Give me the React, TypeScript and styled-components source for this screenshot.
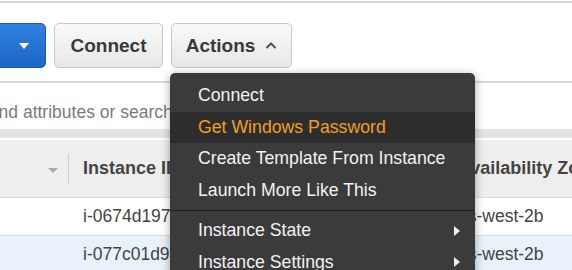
import React from 'react';
import styled, { createGlobalStyle } from 'styled-components';

const GlobalStyle = createGlobalStyle`
  html, body {
    margin: 0;
    padding: 0;
    background: #ffffff;
  }
  body {
    font-family: "Liberation Sans", Arial, sans-serif;
    overflow: hidden;
  }
`;

const Page = styled.div`
  position: relative;
  width: 572px;
  height: 270px;
  overflow: hidden;
  background: #fff;
`;

const TopRule = styled.div`
  margin-top: 1px;
  height: 2px;
  background: #d4d4d4;
`;

const Toolbar = styled.div`
  display: flex;
  align-items: center;
  gap: 8px;
  height: 45px;
  margin: 20px 0 0 -20px;
`;

const GrayButton = styled.button<{ $width: number }>`
  width: ${p => p.$width}px;
  height: 45px;
  padding: 0;
  display: flex;
  align-items: center;
  justify-content: center;
  gap: 10px;
  border: 1px solid #c9c9c9;
  border-radius: 5px;
  background: linear-gradient(#f9f9f9, #e7e7e7);
  font: bold 19px "Liberation Sans", Arial, sans-serif;
  color: #393939;
`;

const BlueButton = styled.button`
  width: 66px;
  height: 45px;
  padding: 0 16px 0 0;
  display: flex;
  align-items: center;
  justify-content: flex-end;
  border: 1px solid #1a5cb2;
  border-radius: 5px;
  background: linear-gradient(#2f83de, #1d66c6);
`;

const DownCaret = styled.span`
  width: 0;
  height: 0;
  border-left: 5px solid transparent;
  border-right: 5px solid transparent;
  border-top: 6px solid #ffffff;
`;

const SearchBar = styled.div`
  margin-top: 13px;
  height: 27px;
  padding-top: 19px;
  border-top: 2px solid #d9d9d9;
  border-bottom: 9px solid #e3e3e3;
  white-space: nowrap;
  overflow: hidden;
`;

const Placeholder = styled.span`
  display: block;
  margin-left: -16px;
  font-size: 17.5px;
  line-height: 20px;
  color: #7a7a7a;
`;

const Table = styled.div`
  margin-top: 2px;
`;

const HeaderRow = styled.div`
  display: grid;
  grid-template-columns: 70px 375px 1fr;
  height: 57px;
  background: #eeeeee;
  border-bottom: 1px solid #dedede;
`;

const HeaderCell = styled.div<{ $end?: boolean }>`
  display: flex;
  align-items: center;
  justify-content: ${p => (p.$end ? 'flex-end' : 'flex-start')};
  gap: 10px;
  padding-left: 13px;
  font-weight: bold;
  font-size: 18px;
  color: #444;
  white-space: nowrap;
  overflow: hidden;
`;

const SortCaret = styled.span`
  width: 0;
  height: 0;
  margin-top: 3px;
  border-left: 5px solid transparent;
  border-right: 5px solid transparent;
  border-top: 5px solid #ababab;
`;

const Divider = styled.span`
  width: 1px;
  height: 30px;
  margin-right: 1px;
  background: #cfcfcf;
`;

const Row = styled.div<{ $selected?: boolean }>`
  display: grid;
  grid-template-columns: 70px 375px 1fr;
  height: 37px;
  background: ${p => (p.$selected ? '#e9f1fb' : '#ffffff')};
  border-bottom: 1px solid #dcdcdc;
`;

const Cell = styled.div`
  display: flex;
  align-items: center;
  padding-left: 13px;
  font-size: 17.5px;
  color: #444;
  white-space: nowrap;
  overflow: hidden;
`;

const Menu = styled.div`
  position: absolute;
  left: 170px;
  top: 73px;
  width: 305px;
  bottom: -20px;
  padding-top: 7px;
  background: #3b3b3b;
  border-radius: 5px 5px 0 0;
  box-shadow: 0 2px 10px rgba(0, 0, 0, 0.35);
`;

const MenuItem = styled.div<{ $active?: boolean }>`
  display: flex;
  align-items: center;
  justify-content: space-between;
  height: 31.5px;
  padding: 0 15px 0 28px;
  font-size: 17.7px;
  color: ${p => (p.$active ? '#f29d25' : '#f2f2f2')};
  background: ${p => (p.$active ? '#2d2d2d' : 'transparent')};
  white-space: nowrap;
`;

const MenuSeparator = styled.div`
  height: 1px;
  margin: 4px 0;
  background: #1f1f1f;
`;

const SubArrow = styled.span`
  width: 0;
  height: 0;
  border-top: 5px solid transparent;
  border-bottom: 5px solid transparent;
  border-left: 6px solid #eeeeee;
`;

const UpChevron = () => (
  <svg width="12" height="7" viewBox="0 0 12 7">
    <polyline points="1.5,6 6,1.5 10.5,6" fill="none" stroke="#555" strokeWidth="2" />
  </svg>
);

const menuTop = ['Connect', 'Get Windows Password', 'Create Template From Instance', 'Launch More Like This'];
const menuSub = ['Instance State', 'Instance Settings'];

const rows = [
  { id: 'i-0674d197', zone: 'us-west-2b' },
  { id: 'i-077c01d9', zone: 'us-west-2b', selected: true },
];

const App = () => {
  return (
    <>
      <GlobalStyle />
      <Page>
        <TopRule />
        <Toolbar>
          <BlueButton>
            <DownCaret />
          </BlueButton>
          <GrayButton $width={109}>Connect</GrayButton>
          <GrayButton $width={121}>
            Actions <UpChevron />
          </GrayButton>
        </Toolbar>
        <SearchBar>
          <Placeholder>Find attributes or search by keyword</Placeholder>
        </SearchBar>
        <Table>
          <HeaderRow>
            <HeaderCell $end>
              <SortCaret />
              <Divider />
            </HeaderCell>
            <HeaderCell>Instance ID</HeaderCell>
            <HeaderCell>Availability Zone</HeaderCell>
          </HeaderRow>
          {rows.map(r => (
            <Row key={r.id} $selected={r.selected}>
              <Cell />
              <Cell>{r.id}</Cell>
              <Cell>{r.zone}</Cell>
            </Row>
          ))}
        </Table>
        <Menu>
          {menuTop.map(item => (
            <MenuItem key={item} $active={item === 'Get Windows Password'}>
              {item}
            </MenuItem>
          ))}
          <MenuSeparator />
          {menuSub.map(item => (
            <MenuItem key={item}>
              {item}
              <SubArrow />
            </MenuItem>
          ))}
        </Menu>
      </Page>
    </>
  );
};

export default App;
